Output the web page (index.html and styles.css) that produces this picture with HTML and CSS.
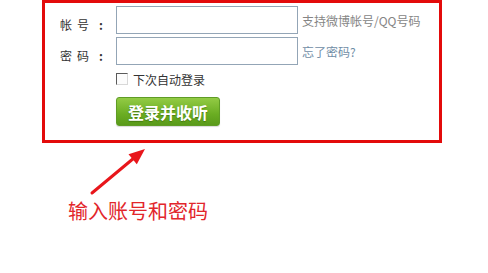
FILE: index.html
```html
<!DOCTYPE html>
<html lang="zh-CN">
<head>
<meta charset="utf-8">
<title>登录</title>
<link rel="stylesheet" href="styles.css">
</head>
<body>
<div class="box">
  <div class="row">
    <label class="label"><span class="c1">帐</span><span>号</span><span class="colon">:</span></label>
    <input class="field" type="text">
    <span class="hint">支持微博帐号/QQ号码</span>
  </div>
  <div class="row">
    <label class="label"><span class="c1">密</span><span>码</span><span class="colon">:</span></label>
    <input class="field" type="password">
    <a class="forgot" href="#">忘了密码?</a>
  </div>
  <div class="check-row">
    <span class="checkbox"></span>
    <span class="check-text">下次自动登录</span>
  </div>
  <button class="btn" type="button">登录并收听</button>
</div>
<svg class="arrow" width="70" height="56" viewBox="0 0 70 56">
  <line x1="7" y1="50" x2="49" y2="15" stroke="#e8161b" stroke-width="3" stroke-linecap="round"/>
  <polygon points="60,6 43.5,11.3 51.8,21.2" fill="#e8161b"/>
</svg>
<div class="note">输入账号和密码</div>
</body>
</html>
```
FILE: styles.css
```css
html, body {
  margin: 0;
  padding: 0;
  background: #fff;
}
body {
  font-family: "Noto Sans CJK SC", "Noto Sans", sans-serif;
  font-size: 12px;
  color: #333;
}
.box {
  margin-left: 42px;
  width: 400px;
  height: 143px;
  box-sizing: border-box;
  border: 3px solid #e30b0b;
  padding: 3px 0 0 15px;
}
.row {
  display: flex;
  align-items: center;
  height: 28px;
  margin-bottom: 3px;
}
.label {
  width: 56px;
  flex: none;
  display: flex;
  align-items: center;
  padding-top: 10px;
  color: #333;
  line-height: 12px;
}
.c1 {
  margin-right: 5px;
}
.colon {
  margin-left: 10px;
  font-weight: bold;
}
.field {
  width: 182px;
  height: 28px;
  box-sizing: border-box;
  margin: 0 4px 0 0;
  border: 1px solid #93a5b6;
  padding: 0 4px;
  background: #fff;
  outline: none;
  flex: none;
}
.hint {
  color: #858585;
}
.forgot {
  color: #6f8da6;
  text-decoration: none;
}
.check-row {
  display: flex;
  align-items: center;
  height: 16px;
  margin: 6px 0 0 56px;
}
.checkbox {
  width: 12px;
  height: 12px;
  box-sizing: border-box;
  border-top: 1px solid #5a5a5a;
  border-left: 1px solid #5a5a5a;
  border-right: 1px solid #d8d8d8;
  border-bottom: 1px solid #d8d8d8;
  background: #fcfcfc;
  margin-right: 5px;
}
.check-text {
  color: #333;
}
.btn {
  display: block;
  margin: 10px 0 0 56px;
  width: 104px;
  height: 29px;
  padding: 0;
  border: 1px solid #5f9c25;
  border-radius: 3px;
  background: linear-gradient(#93cb45, #6aad22 60%, #5a9a1a);
  color: #fff;
  font-family: "Noto Sans CJK SC", sans-serif;
  font-size: 16px;
  font-weight: bold;
  letter-spacing: 0;
  text-shadow: 0 1px 1px rgba(40, 80, 0, 0.5);
  box-shadow: 0 1px 1px rgba(0, 0, 0, 0.15);
}
.arrow {
  display: block;
  margin-left: 85px;
}
.note {
  margin-left: 68px;
  color: #e2262b;
  font-size: 20px;
  line-height: 24px;
}
```
